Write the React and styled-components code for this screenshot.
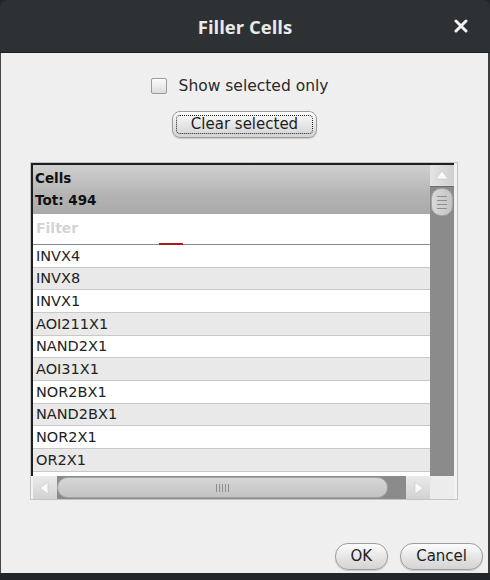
import React from 'react';
import styled, { createGlobalStyle } from 'styled-components';

const GlobalStyle = createGlobalStyle`
  html, body { margin: 0; padding: 0; background: #222527; }
  body { font-family: "DejaVu Sans", "Noto Sans", sans-serif; }
  * { box-sizing: border-box; }
`;

const Page = styled.div`
  width: 490px;
  height: 580px;
  display: flex;
  flex-direction: column;
  background: #232628;
  overflow: hidden;
`;

const TitleBar = styled.div`
  height: 53px;
  flex: none;
  background: #2d3133;
  border-radius: 7px 7px 0 0;
  border-bottom: 1px solid #1b1d1e;
  display: flex;
  align-items: center;
  justify-content: center;
  position: relative;
  color: #e9eaea;
  font-family: "Open Sans", "Noto Sans", sans-serif;
  font-weight: 700;
  font-size: 18.5px;
`;

const CloseButton = styled.div`
  position: absolute;
  right: 20px;
  top: 17px;
  width: 18px;
  height: 18px;
  display: flex;
  align-items: center;
  justify-content: center;
`;

const Body = styled.div`
  height: 520px;
  flex: none;
  background: #efefef;
  border-left: 1px solid #444;
  border-right: 2px solid #3a3d3f;
  display: flex;
  flex-direction: column;
`;

const Options = styled.div`
  padding-top: 24px;
  display: flex;
  flex-direction: column;
  align-items: center;
  gap: 16px;
`;

const CheckRow = styled.label`
  display: flex;
  align-items: center;
  gap: 12px;
  font-size: 15.5px;
  color: #2a2a2a;
  margin-right: 10px;
  height: 18px;
`;

const CheckBox = styled.span`
  width: 16px;
  height: 16px;
  border: 1px solid #9a9a9a;
  border-radius: 2px;
  background: linear-gradient(#fafafa, #dcdcdc);
  box-shadow: inset 0 1px 1px #fff;
`;

const PillButton = styled.button`
  font-family: "DejaVu Sans", "Noto Sans", sans-serif;
  font-size: ${p => p.$size || 15}px;
  color: #1e1e1e;
  height: 27px;
  padding: 0 ${p => p.$pad || 14}px;
  border: 1px solid #9c9c9c;
  border-radius: ${p => p.$radius || 8}px;
  background: linear-gradient(#fdfdfd, #e2e2e2 60%, #d4d4d4);
  box-shadow: 0 1px 1px rgba(0,0,0,0.15);
  display: flex;
  align-items: center;
  justify-content: center;
  position: relative;
  line-height: 1;
`;

const FocusRing = styled.span`
  position: absolute;
  inset: 3px 3px;
  border: 1px dotted #222;
  border-radius: 4px;
  pointer-events: none;
`;

const ListFrame = styled.div`
  margin: 24px 0 0 29px;
  width: 428px;
  height: 338px;
  border: 1px solid #c4c4c4;
  display: grid;
  grid-template-columns: 399px 24px;
  grid-template-rows: 313px 23px;
  background: #f2f2f2;
`;

const ListArea = styled.div`
  border-left: 2px solid #1f1f1f;
  border-top: 2px solid #1f1f1f;
  overflow: hidden;
  background: #fff;
  display: flex;
  flex-direction: column;
`;

const Header = styled.div`
  height: 49px;
  flex: none;
  background: linear-gradient(#d0d0d0, #b4b4b4 60%, #a9a9a9);
  padding: 2px 0 0 2px;
  font-weight: 700;
  font-size: 13.5px;
  color: #111;
  line-height: 22px;
`;

const FilterRow = styled.div`
  height: 31px;
  flex: none;
  background: #fff;
  border-bottom: 1px solid #8c8c8c;
  position: relative;
  display: flex;
  align-items: center;
  padding: 0 0 3px 3px;
  font-size: 14px;
  font-weight: 700;
  color: #d4d4d4;
`;

const FilterMark = styled.span`
  position: absolute;
  left: 126px;
  bottom: -1px;
  width: 24px;
  height: 2px;
  background: #b01818;
`;

const Row = styled.div`
  height: 22.67px;
  flex: none;
  display: flex;
  align-items: center;
  padding-left: 3px;
  font-size: 14.5px;
  color: #222;
  background: ${p => (p.$odd ? '#e9e9e9' : '#ffffff')};
  border-bottom: 1px solid #c9c9c9;
`;

const VScroll = styled.div`
  border-top: 2px solid #1f1f1f;
  background: #8b8b8b;
  display: flex;
  flex-direction: column;
`;

const ArrowBtn = styled.div`
  width: ${p => (p.$h ? '24px' : '100%')};
  height: ${p => (p.$h ? '100%' : '22px')};
  flex: none;
  background: linear-gradient(${p => (p.$h ? '#eaeaea, #d2d2d2' : '90deg, #e4e4e4, #cfcfcf')});
  border-bottom: ${p => (p.$h ? 'none' : '1px solid #6e6e6e')};
  display: flex;
  align-items: center;
  justify-content: center;
`;

const VThumb = styled.div`
  margin: 1px 1px 0;
  height: 28px;
  border-radius: 10px;
  background: linear-gradient(90deg, #d9d9d9, #c4c4c4);
  border: 1px solid #a4a4a4;
  display: flex;
  flex-direction: column;
  align-items: center;
  justify-content: center;
  gap: 3px;
`;

const GripLine = styled.span`
  width: ${p => (p.$v ? '1px' : '10px')};
  height: ${p => (p.$v ? '8px' : '1px')};
  background: #8e8e8e;
`;

const HScroll = styled.div`
  margin-left: 2px;
  background: #8b8b8b;
  display: flex;
  align-items: stretch;
`;

const HThumb = styled.div`
  width: 331px;
  flex: none;
  margin: 1px 0;
  border-radius: 11px;
  background: linear-gradient(#d6d6d6, #c3c3c3);
  border: 1px solid #a4a4a4;
  display: flex;
  align-items: center;
  justify-content: center;
  gap: 2px;
`;

const Track = styled.div`
  flex: 1;
`;

const Corner = styled.div`
  background: #ececec;
`;

const Footer = styled.div`
  margin-top: auto;
  padding: 0 5px 3px 0;
  display: flex;
  justify-content: flex-end;
  gap: 12px;
`;

const cells = [
  'INVX4', 'INVX8', 'INVX1', 'AOI211X1', 'NAND2X1', 'AOI31X1',
  'NOR2BX1', 'NAND2BX1', 'NOR2X1', 'OR2X1', 'AOI21X1',
];

function Triangle({ dir }) {
  const pts = {
    up: '2,11 8,3 14,11',
    left: '11,2 3,8 11,14',
    right: '5,2 13,8 5,14',
  }[dir];
  return (
    <svg width="16" height="16" viewBox="0 0 16 16">
      <polygon points={pts} fill="#fafafa" stroke="#c8c8c8" strokeWidth="0.6" />
    </svg>
  );
}

export default function App() {
  return (
    <Page>
      <GlobalStyle />
      <TitleBar>
        Filler Cells
        <CloseButton>
          <svg width="14" height="14" viewBox="0 0 14 14">
            <path d="M2 2 L12 12 M12 2 L2 12" stroke="#f2f2f2" strokeWidth="3" strokeLinecap="round" />
          </svg>
        </CloseButton>
      </TitleBar>
      <Body>
        <Options>
          <CheckRow>
            <CheckBox />
            Show selected only
          </CheckRow>
          <PillButton $pad={18}>
            <FocusRing />
            Clear selected
          </PillButton>
        </Options>

        <ListFrame>
          <ListArea>
            <Header>
              <div>Cells</div>
              <div>Tot: 494</div>
            </Header>
            <FilterRow>
              Filter
              <FilterMark />
            </FilterRow>
            {cells.map((c, i) => (
              <Row key={c} $odd={i % 2 === 1}>{c}</Row>
            ))}
          </ListArea>
          <VScroll>
            <ArrowBtn><Triangle dir="up" /></ArrowBtn>
            <VThumb>
              <GripLine /><GripLine /><GripLine /><GripLine />
            </VThumb>
          </VScroll>
          <HScroll>
            <ArrowBtn $h><Triangle dir="left" /></ArrowBtn>
            <HThumb>
              <GripLine $v /><GripLine $v /><GripLine $v /><GripLine $v /><GripLine $v />
            </HThumb>
            <Track />
            <ArrowBtn $h><Triangle dir="right" /></ArrowBtn>
          </HScroll>
          <Corner />
        </ListFrame>

        <Footer>
          <PillButton $radius={13} $pad={15}>OK</PillButton>
          <PillButton $radius={13} $pad={15}>Cancel</PillButton>
        </Footer>
      </Body>
    </Page>
  );
}
